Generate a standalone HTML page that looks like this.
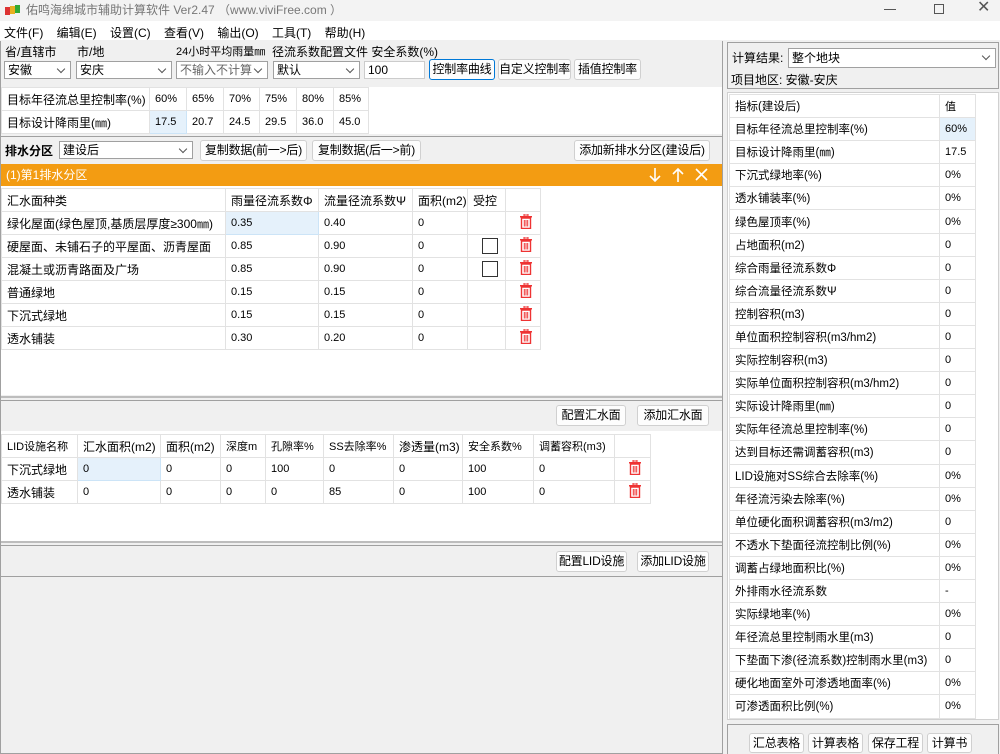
<!DOCTYPE html>
<html><head><meta charset="utf-8">
<style>
*{box-sizing:border-box;margin:0;padding:0}
body{width:1000px;height:754px;overflow:hidden;background:#f0f0f0;font-family:"Liberation Sans","Noto Sans CJK SC",sans-serif;font-size:12px;color:#000;position:relative}
.a{position:absolute}
.t{position:absolute;white-space:nowrap;line-height:14px}
.btn{position:absolute;background:#fdfdfd;border:1px solid #d0d0d0;border-radius:3px;text-align:center;line-height:18px;font-size:12px;white-space:nowrap;overflow:hidden;letter-spacing:-0.2px}
.cb{position:absolute;background:#fff;border:1px solid #a0a0a0;height:18px;line-height:16px;padding-left:3px;font-size:12px}
.cb:after{content:"";position:absolute;right:6px;top:4px;width:5px;height:5px;border-right:1px solid #555;border-bottom:1px solid #555;transform:rotate(45deg)}
table{border-collapse:collapse;position:absolute;font-size:11px}
td{border:1px solid #e2e2e2;padding-left:5px;white-space:nowrap;vertical-align:middle}
.sel{background:#e5f1fb;border:1px solid #cce4f7}
.trash{display:inline-block;width:12px;height:15px;position:relative;margin-left:9px}
.chk{display:inline-block;width:16px;height:16px;border:1px solid #333;background:#fff;margin-left:9px;vertical-align:middle}
</style></head><body>
<div class="a" style="left:0;top:0;width:1000px;height:21px;background:#f3f3f3"></div>
<svg class="a" style="left:5px;top:4px" width="16" height="12"><rect x="0" y="3" width="5" height="8" fill="#d33"/><rect x="5" y="2" width="5" height="8" fill="#e8b020"/><rect x="10" y="1" width="5" height="8" fill="#3a3"/></svg>
<div class="t" style="left:26px;top:3px;color:#777;font-size:12px">佑鸣海绵城市辅助计算软件 Ver2.47 （www.viviFree.com ）</div>
<div class="a" style="left:884px;top:9px;width:12px;height:1px;background:#555"></div>
<div class="a" style="left:934px;top:4px;width:10px;height:10px;border:1px solid #555"></div>
<div class="t" style="left:977px;top:1px;color:#555;font-size:16px">✕</div>
<div class="a" style="left:0;top:21px;width:1000px;height:19px;background:#fff"></div>
<div class="t" style="left:4px;top:26px">文件(F)&nbsp;&nbsp;&nbsp;&nbsp;编辑(E)&nbsp;&nbsp;&nbsp;&nbsp;设置(C)&nbsp;&nbsp;&nbsp;&nbsp;查看(V)&nbsp;&nbsp;&nbsp;&nbsp;输出(O)&nbsp;&nbsp;&nbsp;&nbsp;工具(T)&nbsp;&nbsp;&nbsp;&nbsp;帮助(H)</div>
<div class="a" style="left:0;top:41px;width:723px;height:713px;border:1px solid #a0a0a0;border-top:none"></div>
<div class="t" style="left:5px;top:45px">省/直辖市</div>
<div class="t" style="left:77px;top:45px">市/地</div>
<div class="t" style="left:176px;top:45px;font-size:11px">24小时平均雨量㎜</div>
<div class="t" style="left:272px;top:45px">径流系数配置文件 安全系数(%)</div>
<div class="cb" style="left:4px;top:61px;width:67px">安徽</div>
<div class="cb" style="left:76px;top:61px;width:96px">安庆</div>
<div class="cb" style="left:176px;top:61px;width:92px;color:#666">不输入不计算</div>
<div class="cb" style="left:273px;top:61px;width:87px">默认</div>
<div class="a" style="left:364px;top:61px;width:61px;height:18px;background:#fff;border:1px solid #ccc;padding-left:3px;line-height:16px">100</div>
<div class="btn" style="left:429px;top:59px;width:66px;height:21px;border:1px solid #0078d7">控制率曲线</div>
<div class="btn" style="left:498px;top:59px;width:73px;height:21px">自定义控制率</div>
<div class="btn" style="left:574px;top:59px;width:67px;height:21px">插值控制率</div>
<div class="a" style="left:1px;top:87px;width:721px;height:47px;background:#fff"></div>
<table style="left:1px;top:87px">
<tr style="height:23px"><td style="width:148px;font-size:12px">目标年径流总里控制率(%)</td><td style="width:37px">60%</td><td style="width:37px">65%</td><td style="width:36px">70%</td><td style="width:37px">75%</td><td style="width:37px">80%</td><td style="width:35px">85%</td></tr>
<tr style="height:23px"><td style="font-size:12px">目标设计降雨里(㎜)</td><td class="sel">17.5</td><td>20.7</td><td>24.5</td><td>29.5</td><td>36.0</td><td>45.0</td></tr>
</table>
<div class="a" style="left:1px;top:136px;width:721px;height:1px;background:#a0a0a0"></div>
<div class="t" style="left:5px;top:144px;font-weight:bold">排水分区</div>
<div class="cb" style="left:59px;top:141px;width:134px">建设后</div>
<div class="btn" style="left:200px;top:140px;width:107px;height:21px">复制数据(前一&gt;后)</div>
<div class="btn" style="left:312px;top:140px;width:109px;height:21px">复制数据(后一&gt;前)</div>
<div class="btn" style="left:574px;top:140px;width:136px;height:21px">添加新排水分区(建设后)</div>
<div class="a" style="left:1px;top:164px;width:721px;height:22px;background:#f39c12"></div>
<div class="t" style="left:6px;top:168px;color:#fff">(1)第1排水分区</div>
<svg class="a" style="left:648px;top:167px" width="62" height="16" fill="none" stroke="#fff" stroke-width="1.6"><path d="M7 1V14M2 9L7 14L12 9"/><path d="M30 15V2M25 7L30 2L35 7"/><path d="M48 2L59 13M59 2L48 13"/></svg>
<div class="a" style="left:1px;top:186px;width:721px;height:209px;background:#fff"></div>
<table style="left:1px;top:188px">
<tr style="height:23px"><td style="width:224px;font-size:12px">汇水面种类</td><td style="width:93px;font-size:12px">雨量径流系数Φ</td><td style="width:94px;font-size:12px">流量径流系数Ψ</td><td style="width:55px;font-size:12px">面积(m2)</td><td style="width:38px;font-size:12px">受控</td><td style="width:35px"></td></tr>
<tr style="height:23px"><td style="font-size:12px">绿化屋面(绿色屋顶,基质层厚度≥300㎜)</td><td class="sel">0.35</td><td>0.40</td><td>0</td><td></td><td><span class="trash">T</span></td></tr>
<tr style="height:23px"><td style="font-size:12px">硬屋面、未铺石子的平屋面、沥青屋面</td><td>0.85</td><td>0.90</td><td>0</td><td><span class="chk"></span></td><td><span class="trash">T</span></td></tr>
<tr style="height:23px"><td style="font-size:12px">混凝土或沥青路面及广场</td><td>0.85</td><td>0.90</td><td>0</td><td><span class="chk"></span></td><td><span class="trash">T</span></td></tr>
<tr style="height:23px"><td style="font-size:12px">普通绿地</td><td>0.15</td><td>0.15</td><td>0</td><td></td><td><span class="trash">T</span></td></tr>
<tr style="height:23px"><td style="font-size:12px">下沉式绿地</td><td>0.15</td><td>0.15</td><td>0</td><td></td><td><span class="trash">T</span></td></tr>
<tr style="height:23px"><td style="font-size:12px">透水铺装</td><td>0.30</td><td>0.20</td><td>0</td><td></td><td><span class="trash">T</span></td></tr>
</table>
<div class="a" style="left:1px;top:396px;width:721px;height:2px;background:#bdbdbd"></div>
<div class="a" style="left:1px;top:400px;width:721px;height:1px;background:#a0a0a0"></div>
<div class="btn" style="left:556px;top:405px;width:70px;height:21px">配置汇水面</div>
<div class="btn" style="left:637px;top:405px;width:72px;height:21px">添加汇水面</div>
<div class="a" style="left:1px;top:431px;width:721px;height:110px;background:#fff"></div>
<table style="left:1px;top:434px">
<tr style="height:23px"><td style="width:76px">LID设施名称</td><td style="width:83px;font-size:12px">汇水面积(m2)</td><td style="width:60px;font-size:12px">面积(m2)</td><td style="width:45px">深度m</td><td style="width:58px">孔隙率%</td><td style="width:70px">SS去除率%</td><td style="width:69px;font-size:12px">渗透量(m3)</td><td style="width:71px">安全系数%</td><td style="width:81px">调蓄容积(m3)</td><td style="width:36px"></td></tr>
<tr style="height:23px"><td style="font-size:12px">下沉式绿地</td><td class="sel">0</td><td>0</td><td>0</td><td>100</td><td>0</td><td>0</td><td>100</td><td>0</td><td><span class="trash">T</span></td></tr>
<tr style="height:23px"><td style="font-size:12px">透水铺装</td><td>0</td><td>0</td><td>0</td><td>0</td><td>85</td><td>0</td><td>100</td><td>0</td><td><span class="trash">T</span></td></tr>
</table>
<div class="a" style="left:1px;top:541px;width:721px;height:2px;background:#bdbdbd"></div>
<div class="a" style="left:1px;top:545px;width:721px;height:1px;background:#a0a0a0"></div>
<div class="btn" style="left:556px;top:551px;width:71px;height:21px">配置LID设施</div>
<div class="btn" style="left:637px;top:551px;width:72px;height:21px">添加LID设施</div>
<div class="a" style="left:1px;top:576px;width:721px;height:1px;background:#a0a0a0"></div>
<div class="a" style="left:727px;top:42px;width:272px;height:47px;border:1px solid #a0a0a0"></div>
<div class="t" style="left:732px;top:51px">计算结果:</div>
<div class="cb" style="left:788px;top:48px;width:208px;height:20px;line-height:18px">整个地块</div>
<div class="t" style="left:731px;top:73px">项目地区: 安徽-安庆</div>
<div class="a" style="left:727px;top:92px;width:272px;height:628px;background:#fff;border:1px solid #d0d0d0"></div>
<table style="left:729px;top:94px;font-size:12px" id="rt">
</table>
<div class="a" style="left:727px;top:724px;width:272px;height:30px;border:1px solid #a0a0a0;border-bottom:none"></div>
<div class="btn" style="left:749px;top:733px;width:55px;height:20px">汇总表格</div>
<div class="btn" style="left:808px;top:733px;width:55px;height:20px">计算表格</div>
<div class="btn" style="left:868px;top:733px;width:55px;height:20px">保存工程</div>
<div class="btn" style="left:927px;top:733px;width:45px;height:20px">计算书</div>
<script>
var rows=[["指标(建设后)","值"],["目标年径流总里控制率(%)","60%"],["目标设计降雨里(㎜)","17.5"],["下沉式绿地率(%)","0%"],["透水铺装率(%)","0%"],["绿色屋顶率(%)","0%"],["占地面积(m2)","0"],["综合雨量径流系数Φ","0"],["综合流量径流系数Ψ","0"],["控制容积(m3)","0"],["单位面积控制容积(m3/hm2)","0"],["实际控制容积(m3)","0"],["实际单位面积控制容积(m3/hm2)","0"],["实际设计降雨里(㎜)","0"],["实际年径流总里控制率(%)","0"],["达到目标还需调蓄容积(m3)","0"],["LID设施对SS综合去除率(%)","0%"],["年径流污染去除率(%)","0%"],["单位硬化面积调蓄容积(m3/m2)","0"],["不透水下垫面径流控制比例(%)","0%"],["调蓄占绿地面积比(%)","0%"],["外排雨水径流系数","-"],["实际绿地率(%)","0%"],["年径流总里控制雨水里(m3)","0"],["下垫面下渗(径流系数)控制雨水里(m3)","0"],["硬化地面室外可渗透地面率(%)","0%"],["可渗透面积比例(%)","0%"]];
var h="";rows.forEach(function(r,i){h+='<tr style="height:23.1px"><td style="width:210px;font-size:11.5px">'+r[0]+'</td><td style="width:36px;font-size:11px'+(i==1?';background:#e5f1fb':'')+'">'+r[1]+'</td></tr>'});
document.getElementById("rt").innerHTML=h;
var sv='<svg width="12" height="15" viewBox="0 0 12 15"><rect x="0" y="2" width="12" height="1.5" fill="#e33"/><rect x="4" y="0" width="4" height="2" fill="none" stroke="#e33" stroke-width="1"/><path d="M1.5 4 H10.5 V14.5 H1.5 Z" fill="none" stroke="#e33" stroke-width="1.4"/><path d="M4.3 6V12.5M6 6V12.5M7.7 6V12.5" stroke="#e33" stroke-width="1"/></svg>';
document.querySelectorAll(".trash").forEach(function(e){e.innerHTML=sv});
</script>
</body></html>
